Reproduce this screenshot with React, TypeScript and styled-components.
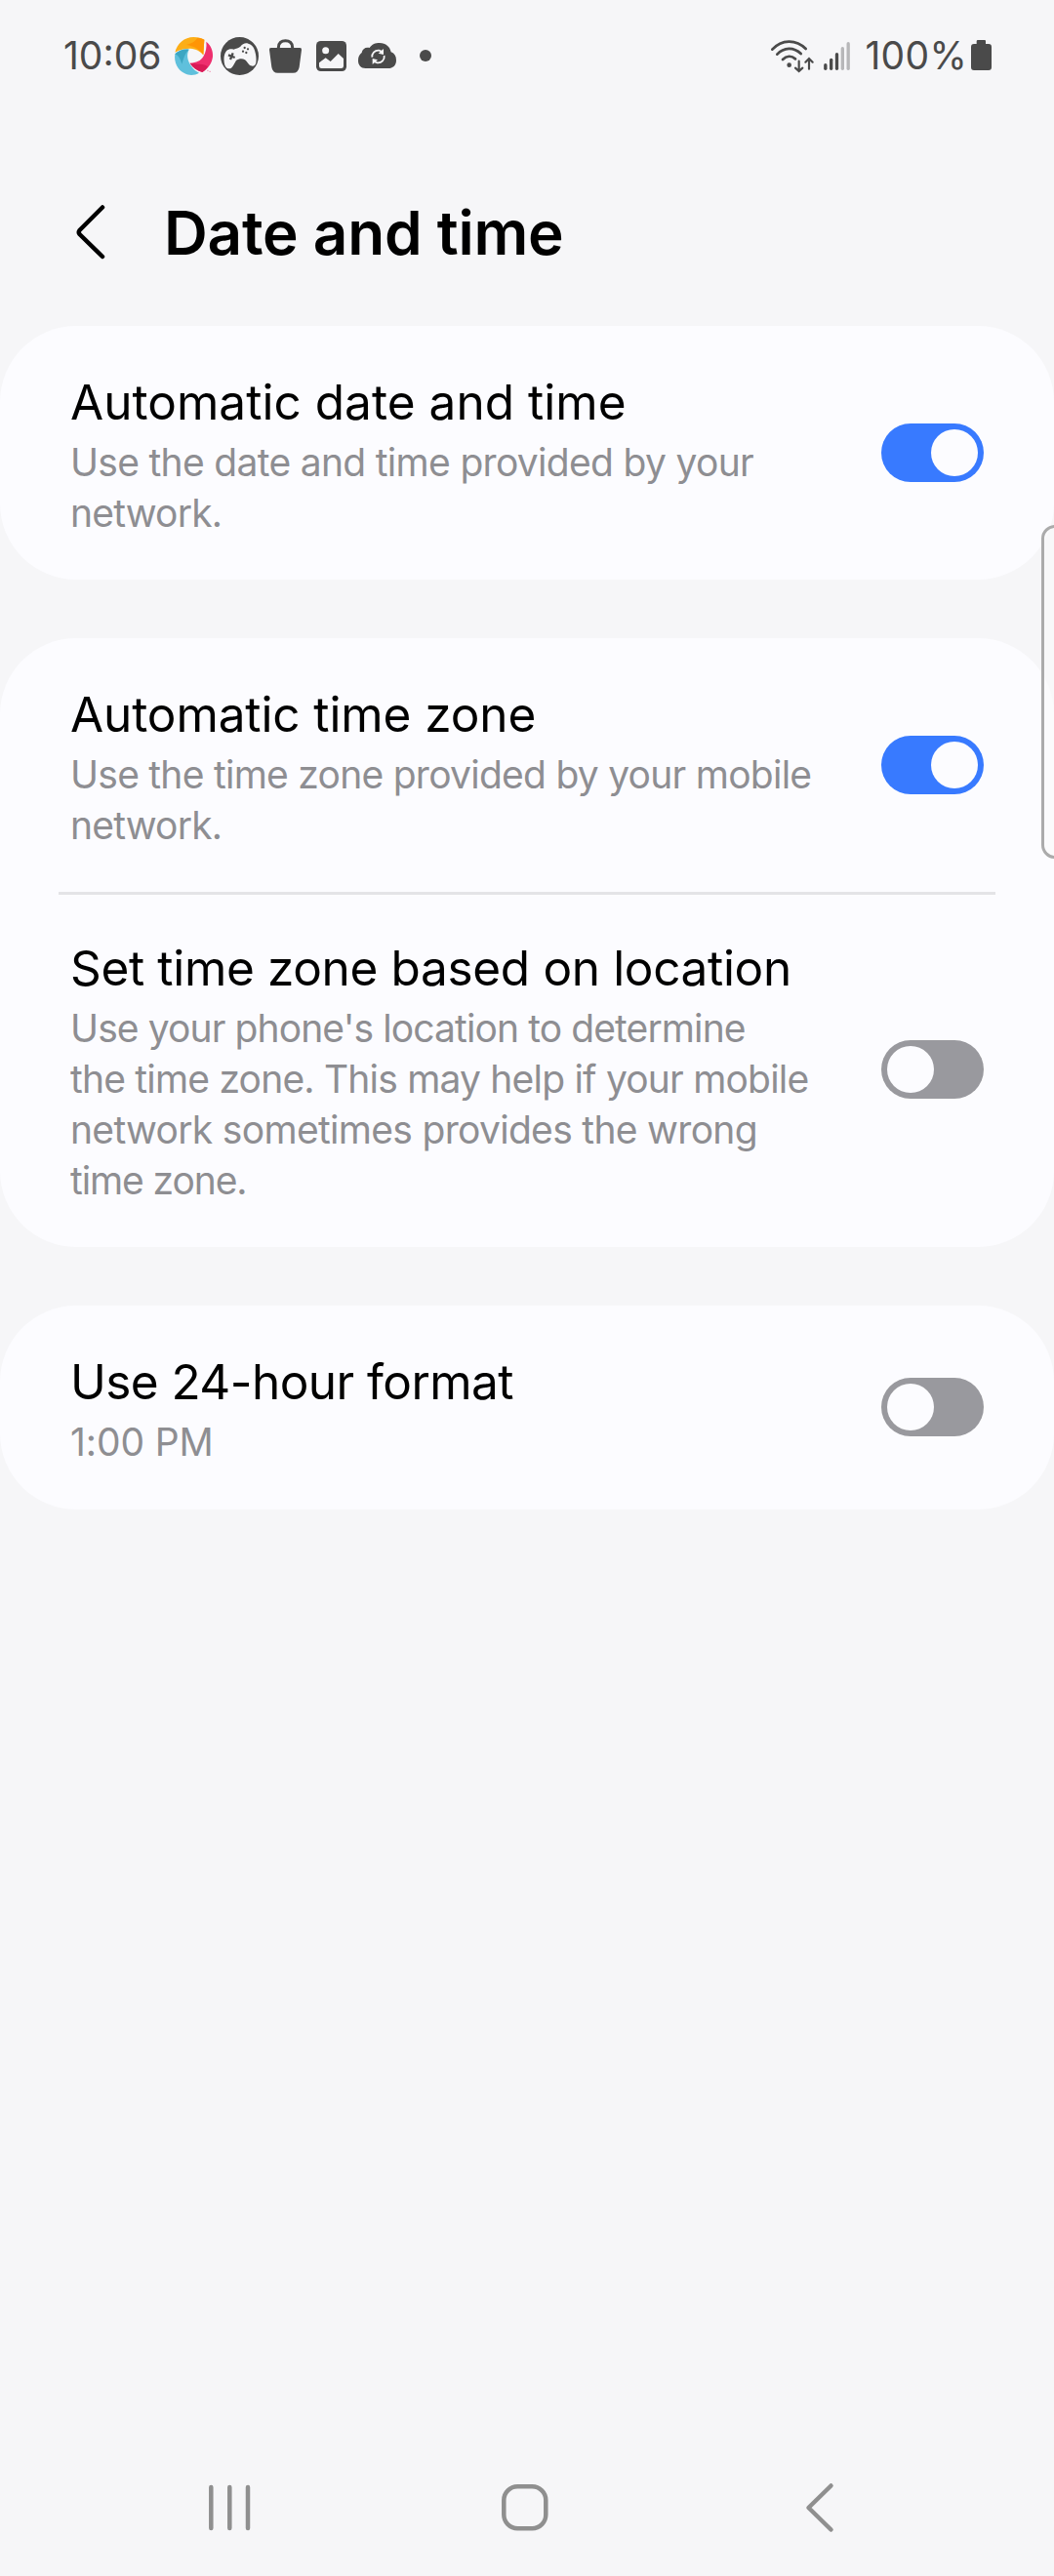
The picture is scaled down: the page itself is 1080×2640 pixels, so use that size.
import React, { useState } from 'react';
import styled, { createGlobalStyle } from 'styled-components';

const ink = '#4a4a4a';
const page = '#f6f6f8';

const GlobalStyle = createGlobalStyle`
  *, *::before, *::after { box-sizing: border-box; }
  body {
    margin: 0;
    background: ${page};
    font-family: Inter, 'Noto Sans', sans-serif;
  }
`;

const Screen = styled.div`
  position: relative;
  display: flex;
  flex-direction: column;
  width: 1080px;
  height: 2640px;
  overflow: hidden;
  background: ${page};
`;

const StatusBar = styled.header`
  display: flex;
  align-items: center;
  justify-content: space-between;
  height: 114px;
  padding: 0 64px 0 65px;
`;

const StatusGroup = styled.div`
  display: flex;
  align-items: center;
`;

const StatusText = styled.span<{ $tracking?: number; $gap?: number }>`
  margin-left: ${p => p.$gap ?? 0}px;
  font-size: 39px;
  line-height: 48px;
  letter-spacing: ${p => p.$tracking ?? 0}px;
  color: ${ink};
  white-space: nowrap;
`;

const Glyph = styled.svg<{ $w: number; $h: number; $gap?: number; $drop?: number }>`
  display: block;
  flex: none;
  width: ${p => p.$w}px;
  height: ${p => p.$h}px;
  margin-left: ${p => p.$gap ?? 0}px;
  margin-top: ${p => p.$drop ?? 0}px;
  overflow: visible;
`;

const TitleBar = styled.div`
  display: flex;
  align-items: center;
  height: 220px;
  padding: 0 76px;
`;

const BackButton = styled.button`
  display: flex;
  width: 92px;
  padding: 0;
  border: 0;
  background: none;
`;

const PageTitle = styled.h1`
  margin: 29px 0 0;
  font-size: 62px;
  font-weight: 600;
  line-height: 76px;
  letter-spacing: -0.22px;
  color: #000;
`;

const Sections = styled.main`
  display: flex;
  flex: 1;
  flex-direction: column;
  gap: 60px;
`;

const Card = styled.section<{ $extra?: number }>`
  padding-bottom: ${p => p.$extra ?? 0}px;
  border-radius: 78px;
  background: #fcfcff;
`;

const Row = styled.div`
  display: flex;
  align-items: center;
  justify-content: space-between;
  padding: 45px 72px 42px;
`;

const Divider = styled.hr`
  height: 3px;
  margin: 0 60px -3px;
  border: 0;
  background: #e4e4e7;
`;

const RowText = styled.div`
  display: flex;
  flex-direction: column;
  gap: 3px;
`;

const RowTitle = styled.div<{ $tracking: number }>`
  font-size: 49.5px;
  line-height: 66px;
  letter-spacing: ${p => p.$tracking}px;
  color: #000;
  white-space: nowrap;
`;

const Summary = styled.div`
  display: flex;
  flex-direction: column;
`;

const SummaryLine = styled.span<{ $tracking: number }>`
  font-size: 39px;
  line-height: 52px;
  letter-spacing: ${p => p.$tracking}px;
  color: #8e8e92;
  white-space: nowrap;
`;

const Track = styled.button<{ $on: boolean }>`
  display: flex;
  flex: none;
  align-items: center;
  justify-content: ${p => (p.$on ? 'flex-end' : 'flex-start')};
  width: 105px;
  height: 60px;
  margin: 0 0 3px;
  padding: 6px;
  border: 0;
  border-radius: 30px;
  background: ${p => (p.$on ? '#387aff' : '#99999e')};
`;

const Thumb = styled.span`
  width: 48px;
  height: 48px;
  border-radius: 50%;
  background: #fcfcff;
`;

const EdgeHandle = styled.div`
  position: absolute;
  top: 538px;
  left: 1067px;
  width: 30px;
  height: 342px;
  border: 3px solid #ababab;
  border-radius: 14px;
  background: rgba(250, 250, 250, 0.6);
`;

const NavBar = styled.nav`
  display: flex;
  align-items: center;
  justify-content: space-between;
  height: 140px;
  padding: 0 226px 0 214px;
`;

function AppLogo() {
  return (
    <Glyph $w={39} $h={39} $gap={13} viewBox="384 54 117 117">
      <path fill="#fcae17" d="M385 101C391 74 414 54 442 54C455 54 466 57 475 62L472 109C462 97 450 91 432 89C414 89 397 93 385 101Z" />
      <path fill="#ff9505" d="M420 78C440 72 447 66 454 56C462 56 469 59 475 62L472 109C462 92 444 82 420 78Z" />
      <path fill="#ee2f6e" d="M481 68C496 80 502 96 501 114C499 133 487 151 469 162C452 156 440 148 431 134C451 133 464 127 472 114C480 101 483 84 481 68Z" />
      <path fill="#d91b57" d="M431 134C452 139 474 134 486 145C482 152 476 158 469 162C452 156 440 148 431 134Z" />
      <path fill="#5fc0dc" d="M385 106C397 94 412 90 428 92C420 108 423 124 433 140C441 152 449 159 459 164C446 172 429 173 415 166C393 156 381 132 385 106Z" />
      <path fill="#3ca6c2" d="M385 106C397 94 412 90 428 92C415 104 411 121 406 137C402 121 396 111 385 106Z" />
      <path stroke="#ee6f98" strokeWidth="2" d="M483 157H488M490 160H495" />
    </Glyph>
  );
}

function GamepadIcon() {
  return (
    <Glyph $w={39} $h={39} $gap={8} viewBox="525 54 117 117">
      <circle cx="583.5" cy="112.5" r="58.5" fill={ink} />
      <path
        fill={page}
        d="M543 97C549 91 557 90 565 92C573 89 580 87 586 83C592 75 601 71 610 74C619 77 625 81 628 90C633 103 636 117 634 132C633 141 626 145 618 142C610 139 607 129 600 124C592 119 580 121 573 126C568 133 565 144 558 149C550 154 541 149 538 140C534 126 534 108 543 97Z"
      />
      <path stroke={ink} strokeWidth="7" d="M549 109L569 117M563 103L555 123" />
      <g fill={ink}>
        <circle cx="599" cy="87" r="3.4" />
        <circle cx="609" cy="91" r="3.4" />
        <circle cx="594" cy="98" r="3.4" />
        <circle cx="604" cy="102" r="3.4" />
      </g>
    </Glyph>
  );
}

function BagIcon() {
  return (
    <Glyph $w={33} $h={35} $gap={11} viewBox="45 60 99 105">
      <path fill="none" stroke={ink} strokeWidth="9" d="M73 92V86C73 72 82 65 94.500 65C107 65 116 72 116 86V92" />
      <path fill={ink} d="M50 87H139Q145 87 144 93L137 146Q134 164 118 164H71Q55 164 52 146L45 93Q44 87 50 87Z" />
    </Glyph>
  );
}

function PictureIcon() {
  return (
    <Glyph $w={31} $h={31} $gap={15} viewBox="189 66 93 93">
      <rect x="189" y="66" width="93" height="93" rx="14" fill={ink} />
      <circle cx="218" cy="95" r="10.500" fill={page} />
      <path fill={page} d="M198 133L218 118L233 129L257 105L273 120V143Q273 150 266 150H205Q198 150 198 143Z" />
    </Glyph>
  );
}

function CloudSyncIcon() {
  return (
    <Glyph $w={39} $h={26} $gap={12} viewBox="318 72 117 78">
      <path fill={ink} d="M341 150C326 150 318 140 318 126C318 114 322 108 329 102C331 90 341 84 353 87C360 76 371 72 384 72C403 72 416 84 419 100C430 104 435 113 435 125C435 141 425 150 410 150Z" />
      <g fill="none" stroke={page} strokeWidth="5.500">
        <path d="M361 116C359 104 369 94 382 95L392 99" />
        <path d="M398 111C400 124 390 134 377 133L366 129" />
      </g>
      <path fill={page} d="M396 90V108L380 104ZM362 138V120L378 124Z" />
    </Glyph>
  );
}

function WifiIcon() {
  return (
    <Glyph $w={44} $h={33} viewBox="62 59 132 99">
      <g fill="none" stroke={ink} strokeWidth="8.200" strokeLinecap="round">
        <path d="M66 88C95 56 139 56 169 86" />
        <path d="M81 103C102 80 132 80 154 101" />
        <path d="M98 119C110 107 125 107 137 117" />
        <path strokeWidth="6.500" d="M148 124V154M137 145L148 155L159 145" />
        <path strokeWidth="6.500" d="M179 148V117M168 127L179 116L190 127" />
      </g>
      <circle cx="118" cy="136" r="7" fill={ink} />
    </Glyph>
  );
}

function SignalIcon() {
  return (
    <Glyph $w={27} $h={29} $gap={10} viewBox="222 66 81 87">
      <g strokeWidth="10" strokeLinecap="round" stroke={ink}>
        <path d="M227.500 137V148" />
        <path d="M245 121V148" />
        <path d="M262.500 104V148" />
        <path stroke="#b7b7b9" d="M280 86V148" />
        <path stroke="#b7b7b9" d="M297.500 71V148" />
      </g>
    </Glyph>
  );
}

function BatteryIcon() {
  return (
    <Glyph $w={21} $h={31} $gap={4} $drop={-1} viewBox="675 63 63 93">
      <path fill={ink} d="M696 63H717Q720 63 720 67V75H729Q738 75 738 84V147Q738 156 729 156H684Q675 156 675 147V84Q675 75 684 75H692V67Q692 63 696 63Z" />
    </Glyph>
  );
}

function Switch({ initial }: { initial: boolean }) {
  const [on, setOn] = useState(initial);
  return (
    <Track $on={on} role="switch" aria-checked={on} onClick={() => setOn(!on)}>
      <Thumb />
    </Track>
  );
}

type Line = [text: string, tracking: number];

function Setting({ title, lines, on }: { title: Line; lines: Line[]; on: boolean }) {
  return (
    <Row>
      <RowText>
        <RowTitle $tracking={title[1]}>{title[0]}</RowTitle>
        <Summary>
          {lines.map(([text, tracking]) => (
            <SummaryLine key={text} $tracking={tracking}>{text}</SummaryLine>
          ))}
        </Summary>
      </RowText>
      <Switch initial={on} />
    </Row>
  );
}

export default function App() {
  return (
    <Screen>
      <GlobalStyle />
      <StatusBar>
        <StatusGroup>
          <StatusText>10:06</StatusText>
          <AppLogo />
          <GamepadIcon />
          <BagIcon />
          <PictureIcon />
          <CloudSyncIcon />
          <Glyph $w={12} $h={12} $gap={24} viewBox="0 0 12 12">
            <circle cx="6" cy="6" r="6" fill={ink} />
          </Glyph>
        </StatusGroup>
        <StatusGroup>
          <WifiIcon />
          <SignalIcon />
          <StatusText $gap={15} $tracking={0.3}>100%</StatusText>
          <BatteryIcon />
        </StatusGroup>
      </StatusBar>

      <TitleBar>
        <BackButton aria-label="Back">
          <Glyph $w={34} $h={56} $drop={27} viewBox="0 0 34 56">
            <path fill="none" stroke="#000" strokeWidth="4.500" strokeLinecap="round" strokeLinejoin="round" d="M29 2.500L5.500 26Q4 28 5.500 30L29 53" />
          </Glyph>
        </BackButton>
        <PageTitle>Date and time</PageTitle>
      </TitleBar>

      <Sections>
        <Card>
          <Setting
            title={['Automatic date and time', 0.04]}
            lines={[['Use the date and time provided by your', -0.69], ['network.', -0.8]]}
            on
          />
        </Card>
        <Card>
          <Setting
            title={['Automatic time zone', -0.1]}
            lines={[['Use the time zone provided by your mobile', -0.74], ['network.', -0.8]]}
            on
          />
          <Divider />
          <Setting
            title={['Set time zone based on location', -0.34]}
            lines={[
              ["Use your phone's location to determine", -0.89],
              ['the time zone. This may help if your mobile', -0.8],
              ['network sometimes provides the wrong', -0.69],
              ['time zone.', -1.1],
            ]}
            on={false}
          />
        </Card>
        <Card $extra={1}>
          <Setting title={['Use 24-hour format', -0.56]} lines={[['1:00 PM', -0.1]]} on={false} />
        </Card>
      </Sections>

      <NavBar>
        <Glyph $w={43} $h={48} viewBox="0 0 43 48">
          <path stroke="#8f8f8f" strokeWidth="4.500" strokeLinecap="round" d="M2.300 3V45M21.300 3V45M40 3V45" />
        </Glyph>
        <Glyph $w={48} $h={48} $gap={-8} viewBox="0 0 48 48">
          <rect x="2.300" y="2.300" width="43" height="43" rx="14" fill="none" stroke="#8f8f8f" strokeWidth="4.500" />
        </Glyph>
        <Glyph $w={28} $h={50} viewBox="0 0 28 50">
          <path fill="none" stroke="#8f8f8f" strokeWidth="4.500" strokeLinecap="round" strokeLinejoin="round" d="M25.500 2.500L2.500 25L25.500 47.500" />
        </Glyph>
      </NavBar>
      <EdgeHandle />
    </Screen>
  );
}
